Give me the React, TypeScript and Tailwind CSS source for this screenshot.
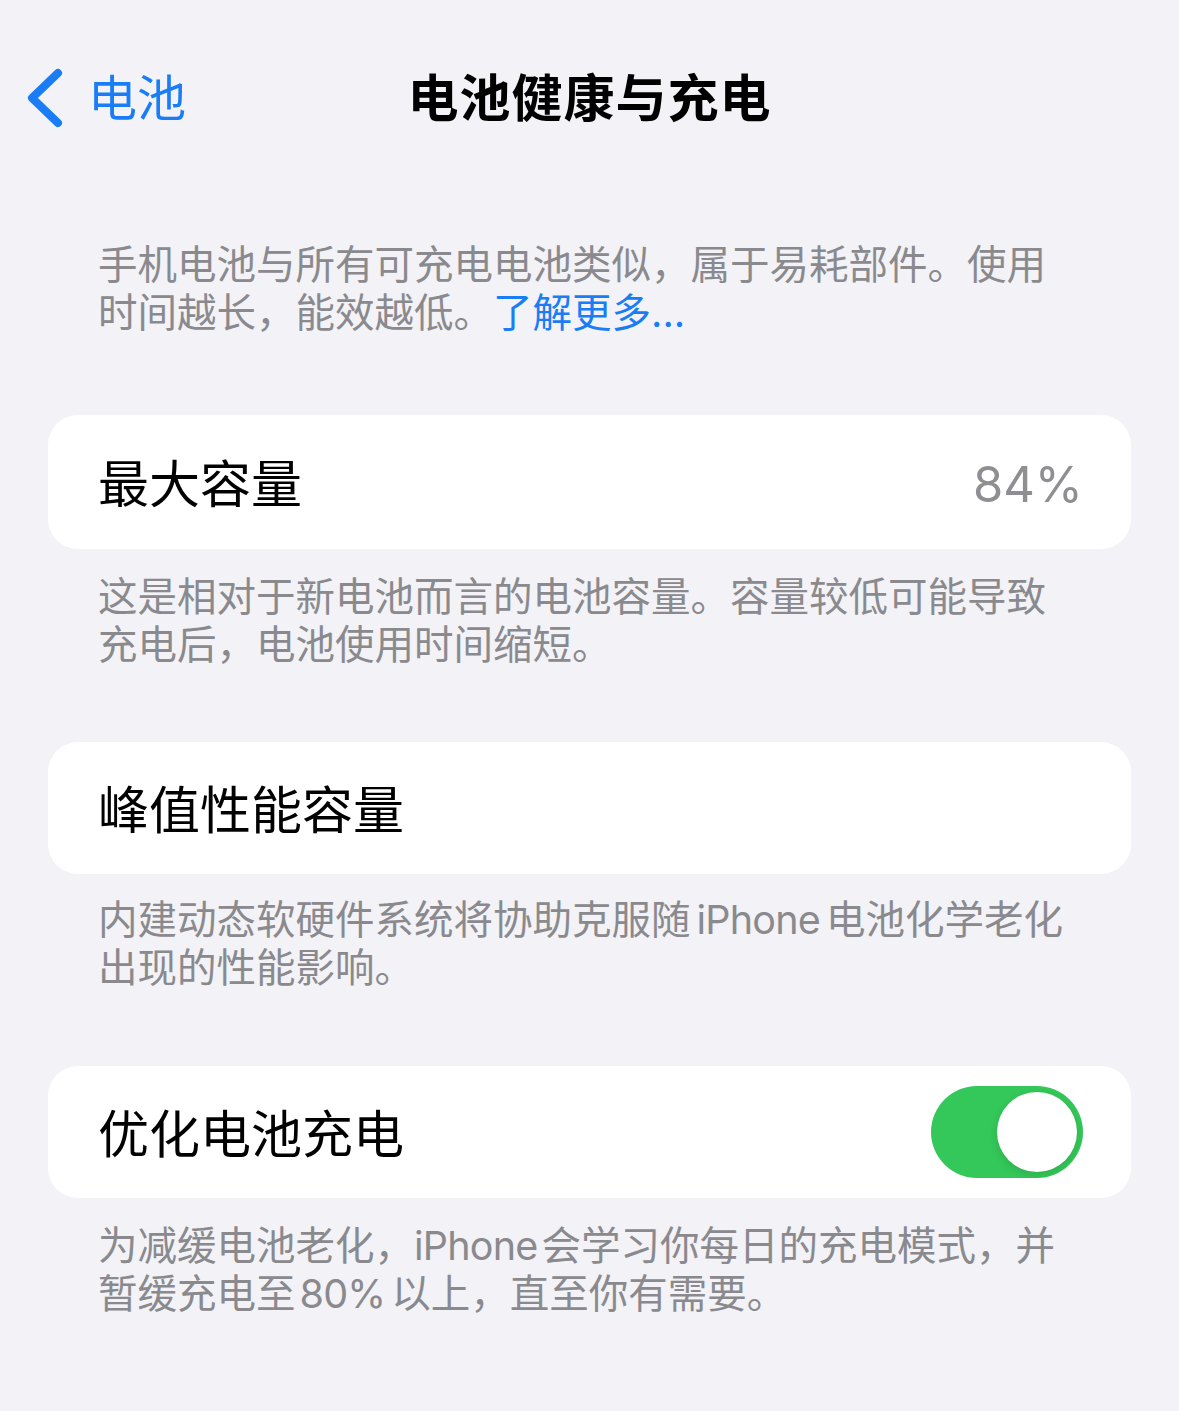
import React from "react";

const font = {
  fontFamily: 'Inter, "Noto Sans CJK SC", "Noto Sans", sans-serif',
};

function Toggle({ on }: { on: boolean }) {
  return (
    <div
      className={`relative h-[92px] w-[152px] rounded-full ${on ? "bg-[#34c759]" : "bg-[#e9e9eb]"}`}
    >
      <div
        className={`absolute top-[6px] h-[80px] w-[80px] rounded-full bg-white shadow-[0_3px_8px_rgba(0,0,0,0.12)] ${on ? "right-[6px]" : "left-[6px]"}`}
      />
    </div>
  );
}

function Card({ children, tall = false }: { children: React.ReactNode; tall?: boolean }) {
  return (
    <div
      className={`mx-[48px] flex items-center justify-between rounded-[30px] bg-white pl-[50px] pr-[48px] ${tall ? "h-[134px]" : "h-[132px]"}`}
    >
      {children}
    </div>
  );
}

function Label({ children }: { children: React.ReactNode }) {
  return <span className="mt-[5px] text-[51px] leading-none text-black">{children}</span>;
}

// Latin words inside Chinese copy, set a touch tighter with narrow gaps
function Latin({ children, before = 0, after = 0 }: { children: React.ReactNode; before?: number; after?: number }) {
  const gap = ["ml-0", "ml-[2px]", "ml-[4px]", "ml-[6px]"][before];
  const gapR = ["mr-0", "mr-[2px]", "mr-[4px]", "mr-[6px]"][after];
  return <span className={`tracking-[-0.8px] ${gap} ${gapR}`}>{children}</span>;
}

function Note({ children, className = "" }: { children: React.ReactNode; className?: string }) {
  return (
    <p className={`whitespace-nowrap px-[98px] text-[39.5px] leading-[48px] text-[#8a8a8e] ${className}`}>
      {children}
    </p>
  );
}

export default function App() {
  return (
    <div className="min-h-[1411px] w-[1179px] bg-[#f2f2f7] pb-[90px]" style={font}>
      {/* navigation bar */}
      <div className="relative flex h-[196px] items-center justify-center">
        <div className="absolute left-[24px] top-0 flex h-[196px] items-center">
          <svg width="44" height="62" viewBox="0 0 44 62" className="mr-[20px]">
            <path
              d="M34 6 L8 31 L34 56"
              fill="none"
              stroke="#1a7df5"
              strokeWidth="8"
              strokeLinecap="round"
              strokeLinejoin="round"
            />
          </svg>
          <span className="text-[49px] leading-none text-[#1a7df5]">电池</span>
        </div>
        <h1 className="text-[51px] font-bold leading-none tracking-[1px] text-black">电池健康与充电</h1>
      </div>

      <Note className="mt-[45px]">
        手机电池与所有可充电电池类似，属于易耗部件。使用
        <br />
        时间越长，能效越低。<span className="text-[#1a7df5]">了解更多...</span>
      </Note>

      <div className="mt-[78px]">
        <Card tall>
          <Label>最大容量</Label>
          <span className="mt-[4px] text-[49px] leading-none text-[#8e8e93]">84%</span>
        </Card>
      </div>
      <Note className="mt-[24px]">
        这是相对于新电池而言的电池容量。容量较低可能导致
        <br />
        充电后，电池使用时间缩短。
      </Note>

      <div className="mt-[73px]">
        <Card>
          <Label>峰值性能容量</Label>
        </Card>
      </div>
      <Note className="mt-[22px]">
        内建动态软硬件系统将协助克服随<Latin before={3} after={3}>iPhone</Latin>电池化学老化
        <br />
        出现的性能影响。
      </Note>

      <div className="mt-[74px]">
        <Card>
          <Label>优化电池充电</Label>
          <Toggle on />
        </Card>
      </div>
      <Note className="mt-[24px]">
        为减缓电池老化，<Latin after={2}>iPhone</Latin>会学习你每日的充电模式，并
        <br />
        暂缓充电至<Latin before={2} after={3}>80%</Latin>以上，直至你有需要。
      </Note>
    </div>
  );
}
